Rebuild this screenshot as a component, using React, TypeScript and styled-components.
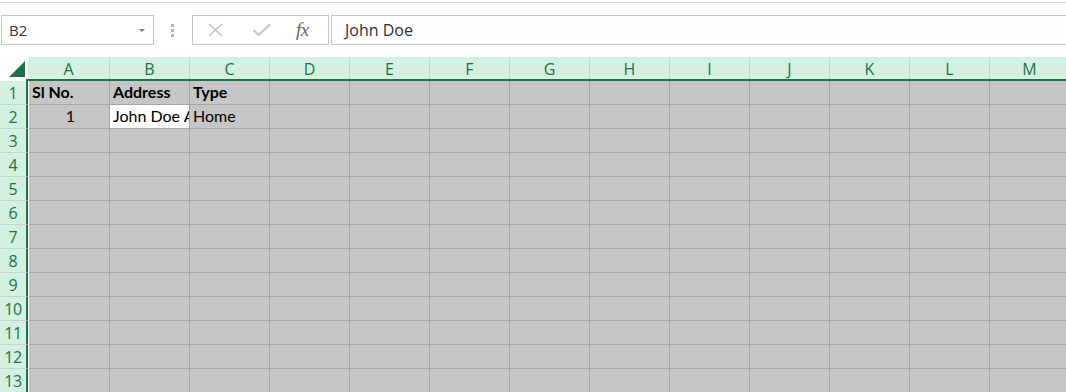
import styled, { createGlobalStyle } from "styled-components";

const GlobalStyle = createGlobalStyle`
  html, body {
    margin: 0;
    padding: 0;
    background: #ffffff;
    overflow: hidden;
  }
`;

const COLUMNS = ["A", "B", "C", "D", "E", "F", "G", "H", "I", "J", "K", "L", "M"];
const ROWS = [1, 2, 3, 4, 5, 6, 7, 8, 9, 10, 11, 12, 13];

const GREEN = "#217346";
const HEAD_BG = "#d3f0e0";
const CELL_BG = "#c6c6c6";
const GRID_LINE = "#a6a6a6";

const Page = styled.div`
  width: 1066px;
  height: 392px;
  overflow: hidden;
  background: #ffffff;
  font-family: "Open Sans", "Noto Sans", sans-serif;
`;

const TopRule = styled.div`
  height: 2px;
  border-bottom: 1px solid #d6d6d6;
`;

const FormulaBar = styled.div`
  display: flex;
  align-items: stretch;
  height: 30px;
  margin: 12px 0 12px 1px;
`;

const NameBox = styled.div`
  box-sizing: border-box;
  width: 153px;
  display: flex;
  align-items: center;
  justify-content: space-between;
  padding: 0 8px 1px 7px;
  border: 1px solid #c6c6c6;
  background: #ffffff;
  font-size: 15px;
  color: #333333;
`;

const Caret = styled.span`
  width: 0;
  height: 0;
  margin-top: 2px;
  border-left: 3.5px solid transparent;
  border-right: 3.5px solid transparent;
  border-top: 3.5px solid #7a7a7a;
`;

const Grip = styled.div`
  width: 37px;
  display: flex;
  flex-direction: column;
  align-items: center;
  justify-content: center;
  gap: 2px;
  padding-right: 1px;
`;

const GripDot = styled.span`
  width: 3px;
  height: 3px;
  background: #b4b4b4;
`;

const FxButtons = styled.div`
  box-sizing: border-box;
  width: 137px;
  display: flex;
  align-items: center;
  border: 1px solid #c6c6c6;
  background: #ffffff;
  padding-left: 13px;
  gap: 26px;
`;

const IconSlot = styled.span`
  display: flex;
  align-items: center;
  justify-content: center;
  width: 20px;
  height: 20px;
`;

const FxLabel = styled.span`
  font-family: "Liberation Serif", "DejaVu Serif", serif;
  font-style: italic;
  font-size: 19px;
  color: #666666;
  letter-spacing: -0.5px;
  margin-left: -2px;
`;

const FormulaInput = styled.div`
  box-sizing: border-box;
  flex: 1;
  margin-left: 2px;
  margin-right: -4px;
  display: flex;
  align-items: center;
  padding: 0 0 1px 13px;
  border: 1px solid #c6c6c6;
  background: #fdfdfd;
  font-size: 16px;
  color: #333333;
`;

const Sheet = styled.div`
  display: flex;
  flex-direction: column;
`;

const HeaderRow = styled.div`
  display: flex;
  height: 24px;
`;

const Corner = styled.div`
  position: relative;
  flex: none;
  width: 26px;
  background: #ffffff;
`;

const CornerMark = styled.span`
  position: absolute;
  left: 9px;
  top: 4px;
  width: 0;
  height: 0;
  border-left: 16px solid transparent;
  border-bottom: 16px solid ${GREEN};
`;

const HeadStrip = styled.div`
  display: flex;
  flex: none;
  padding-left: 2px;
  background: #ffffff;
  border-bottom: 2px solid ${GREEN};
  box-sizing: border-box;
  height: 24px;
`;

const ColHead = styled.div<{ $w: number }>`
  box-sizing: border-box;
  flex: none;
  width: ${({ $w }) => $w}px;
  height: 22px;
  display: flex;
  align-items: center;
  justify-content: center;
  background: ${HEAD_BG};
  border-right: 1px solid #c3d6ca;
  color: ${GREEN};
  font-size: 16px;
  padding-top: 1px;
`;

const Row = styled.div`
  display: flex;
  height: 24px;
`;

const RowHead = styled.div`
  box-sizing: border-box;
  flex: none;
  width: 28px;
  margin-right: 1px;
  display: flex;
  align-items: center;
  justify-content: center;
  background: ${HEAD_BG};
  border-right: 2px solid ${GREEN};
  border-bottom: 1px solid #c3d6ca;
  color: ${GREEN};
  font-size: 16px;
  letter-spacing: -0.3px;
  padding-top: 1px;
`;

const Cell = styled.div<{
  $w: number;
  $active?: boolean;
  $bold?: boolean;
  $align?: "left" | "center";
}>`
  box-sizing: border-box;
  flex: none;
  width: ${({ $w }) => $w}px;
  height: 24px;
  display: flex;
  align-items: flex-end;
  justify-content: ${({ $align }) => ($align === "center" ? "center" : "flex-start")};
  padding: 0 0 3px 3px;
  overflow: hidden;
  white-space: nowrap;
  background: ${({ $active }) => ($active ? "#ffffff" : CELL_BG)};
  border-right: 1px solid ${GRID_LINE};
  border-bottom: 1px solid ${GRID_LINE};
  font-family: Lato, "Liberation Sans", sans-serif;
  font-size: 16px;
  font-weight: ${({ $bold }) => ($bold ? 700 : 400)};
  color: #000000;
  line-height: 18px;
`;

type CellData = { text: string; bold?: boolean; align?: "left" | "center" };

const DATA: Record<string, CellData> = {
  A1: { text: "Sl No.", bold: true },
  B1: { text: "Address", bold: true },
  C1: { text: "Type", bold: true },
  A2: { text: "1", align: "center" },
  B2: { text: "John Doe Address" },
  C2: { text: "Home" },
};

const colWidth = (i: number) => (i === 0 ? 81 : 80);

function CrossIcon() {
  return (
    <svg width="18" height="14" viewBox="0 0 18 14">
      <path d="M2 1 L15 13 M15 1 L2 13" stroke="#c4c4c4" strokeWidth="1.6" fill="none" />
    </svg>
  );
}

function CheckIcon() {
  return (
    <svg width="20" height="14" viewBox="0 0 20 14">
      <path d="M1.5 7 L6.5 12 L18 1.5" stroke="#c4c4c4" strokeWidth="2" fill="none" />
    </svg>
  );
}

export default function App() {
  return (
    <Page>
      <GlobalStyle />
      <TopRule />
      <FormulaBar>
        <NameBox>
          <span>B2</span>
          <Caret />
        </NameBox>
        <Grip>
          <GripDot />
          <GripDot />
          <GripDot />
        </Grip>
        <FxButtons>
          <IconSlot>
            <CrossIcon />
          </IconSlot>
          <IconSlot>
            <CheckIcon />
          </IconSlot>
          <FxLabel>fx</FxLabel>
        </FxButtons>
        <FormulaInput>John Doe</FormulaInput>
      </FormulaBar>
      <Sheet>
        <HeaderRow>
          <Corner>
            <CornerMark />
          </Corner>
          <HeadStrip>
            {COLUMNS.map((c, i) => (
              <ColHead key={c} $w={i === 0 ? 82 : 80}>
                {c}
              </ColHead>
            ))}
          </HeadStrip>
        </HeaderRow>
        {ROWS.map((r) => (
          <Row key={r}>
            <RowHead>{r}</RowHead>
            {COLUMNS.map((c, i) => {
              const d = DATA[`${c}${r}`];
              return (
                <Cell
                  key={c}
                  $w={colWidth(i)}
                  $active={c === "B" && r === 2}
                  $bold={d?.bold}
                  $align={d?.align}
                >
                  {d?.text}
                </Cell>
              );
            })}
          </Row>
        ))}
      </Sheet>
    </Page>
  );
}
